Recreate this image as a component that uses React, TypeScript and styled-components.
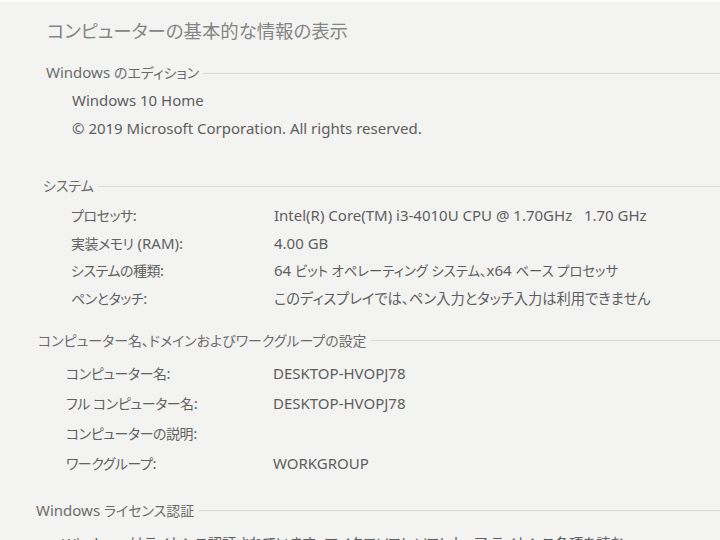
import React from "react";
import styled, { createGlobalStyle } from "styled-components";

const Global = createGlobalStyle`
  html, body { margin: 0; padding: 0; background: #f3f3f1; }
  body {
    font-family: "Noto Sans", "Noto Sans CJK JP", sans-serif;
    font-feature-settings: "palt";
  }
`;

const Page = styled.div`
  width: 720px;
  height: 540px;
  overflow: hidden;
  box-sizing: border-box;
  background: #f3f3f1;
  border-top: 2px solid #fafaf9;
  padding-top: 17px;
  display: flex;
  flex-direction: column;
  color: #606060;
`;

const Title = styled.h1`
  margin: 0 0 0 47px;
  font-size: 18.4px;
  line-height: 24px;
  font-weight: 400;
  color: #858585;
  white-space: nowrap;
`;

const Ja = styled.span<{ $scale?: number; $ls?: number }>`
  font-size: ${(p) => p.$scale ?? 0.93}em;
  letter-spacing: ${(p) => p.$ls ?? 0}em;
`;

const Section = styled.section<{ $top: number; $left: number }>`
  margin-top: ${(p) => p.$top}px;
  margin-left: ${(p) => p.$left}px;
  display: flex;
  flex-direction: column;
`;

const Heading = styled.div<{ $after: number }>`
  display: flex;
  align-items: center;
  gap: 4px;
  height: 20px;
  margin-bottom: ${(p) => p.$after}px;
  font-size: 15px;
  color: #6c6c6c;
  white-space: nowrap;
  &::after {
    content: "";
    flex: 1;
    height: 1px;
    margin-top: 2px;
    background: #d9d9d7;
  }
`;

const Rows = styled.div<{ $indent: number; $label: number; $row: number }>`
  display: grid;
  grid-template-columns: ${(p) => p.$label}px 1fr;
  grid-auto-rows: ${(p) => p.$row}px;
  padding-left: ${(p) => p.$indent}px;
  font-size: 15px;
  align-items: center;
  white-space: nowrap;
`;

const Label = styled.div`
  color: #626262;
`;

const Value = styled.div`
  color: #5e5e5e;
`;

const Line = styled.div`
  grid-column: 1 / -1;
  color: #5e5e5e;
`;

const L = ({ children }: { children: React.ReactNode }) => (
  <Ja $scale={0.93} $ls={-0.03}>{children}</Ja>
);
const H = ({ children }: { children: React.ReactNode }) => (
  <Ja $scale={0.93}>{children}</Ja>
);
const V = ({ children }: { children: React.ReactNode }) => (
  <Ja $scale={0.95}>{children}</Ja>
);

export default function App() {
  return (
    <>
      <Global />
      <Page>
        <Title>コンピューターの基本的な情報の表示</Title>

        <Section $top={19} $left={46}>
          <Heading $after={4}>
            <span>Windows <H>のエディション</H></span>
          </Heading>
          <Rows $indent={26} $label={200} $row={28}>
            <Line>Windows 10 Home</Line>
            <Line>© 2019 Microsoft Corporation. All rights reserved.</Line>
          </Rows>
        </Section>

        <Section $top={33} $left={43}>
          <Heading $after={6}>
            <H>システム</H>
          </Heading>
          <Rows $indent={28} $label={203} $row={27.7}>
            <Label><L>プロセッサ</L>:</Label>
            <Value>Intel(R) Core(TM) i3-4010U CPU @ 1.70GHz&nbsp;&nbsp;&nbsp;1.70 GHz</Value>
            <Label><L>実装メモリ</L> (RAM):</Label>
            <Value>4.00 GB</Value>
            <Label><L>システムの種類</L>:</Label>
            <Value>64 <Ja $scale={0.89}>ビット オペレーティング システム、</Ja>x64 <Ja $scale={0.89}>ベース プロセッサ</Ja></Value>
            <Label><L>ペンとタッチ</L>:</Label>
            <Value><V>このディスプレイでは、ペン入力とタッチ入力は利用できません</V></Value>
          </Rows>
        </Section>

        <Section $top={18} $left={38}>
          <Heading $after={8}>
            <H>コンピューター名、ドメインおよびワークグループの設定</H>
          </Heading>
          <Rows $indent={28} $label={207} $row={30}>
            <Label><L>コンピューター名</L>:</Label>
            <Value>DESKTOP-HVOPJ78</Value>
            <Label><L>フル コンピューター名</L>:</Label>
            <Value>DESKTOP-HVOPJ78</Value>
            <Label><L>コンピューターの説明</L>:</Label>
            <Value></Value>
            <Label><L>ワークグループ</L>:</Label>
            <Value>WORKGROUP</Value>
          </Rows>
        </Section>

        <Section $top={22} $left={36}>
          <Heading $after={8}>
            <span>Windows <H>ライセンス認証</H></span>
          </Heading>
          <Rows $indent={26} $label={205} $row={30}>
            <Line>
              Windows <V>はライセンス認証されています。 マイクロソフト ソフトウェア ライセンス条項を読む</V>
            </Line>
          </Rows>
        </Section>
      </Page>
    </>
  );
}
